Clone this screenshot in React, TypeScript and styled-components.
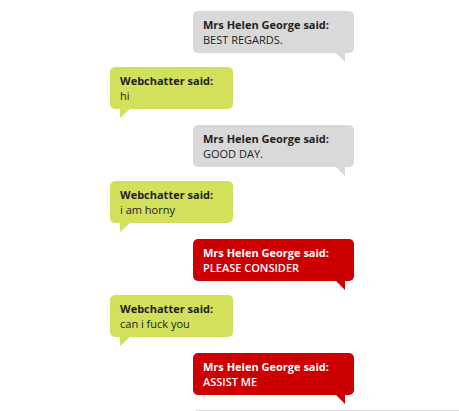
import React from "react";
import styled, { createGlobalStyle } from "styled-components";

const Global = createGlobalStyle`
  html, body { margin: 0; padding: 0; background: #ffffff; }
  body { font-family: "Open Sans", "DejaVu Sans", sans-serif; }
`;

type Kind = "gray" | "green" | "red";

const palette: Record<Kind, { bg: string; fg: string }> = {
  gray: { bg: "#d9d9d9", fg: "#222222" },
  green: { bg: "#d2e05b", fg: "#222222" },
  red: { bg: "#cc0000", fg: "#ffffff" },
};

const Log = styled.div`
  display: flex;
  flex-direction: column;
  width: 244px;
  padding: 11px 0 0 110px;
`;

const Bubble = styled.div<{ $kind: Kind }>`
  position: relative;
  box-sizing: border-box;
  align-self: ${(p) => (p.$kind === "green" ? "flex-start" : "flex-end")};
  width: ${(p) => (p.$kind === "green" ? "123px" : "161px")};
  height: 42px;
  margin-bottom: ${(p) => (p.$kind === "green" ? "16px" : "14px")};
  padding: 6px 10px 0 10px;
  border-radius: 5px;
  background: ${(p) => palette[p.$kind].bg};
  color: ${(p) => palette[p.$kind].fg};
  font-size: 11px;
  line-height: 15px;
  &::after {
    content: "";
    position: absolute;
    bottom: -9px;
    width: 0;
    height: 0;
    border-top: 9px solid ${(p) => palette[p.$kind].bg};
    ${(p) =>
      p.$kind === "green"
        ? "left: 10px; border-right: 10px solid transparent;"
        : "right: 9px; border-left: 9px solid transparent;"}
  }
`;

const Who = styled.div`
  font-weight: 700;
  white-space: nowrap;
`;

const Said = styled.div<{ $kind: Kind }>`
  white-space: nowrap;
  font-weight: ${(p) => (p.$kind === "red" ? 600 : 400)};
`;

const Divider = styled.div`
  margin: 1px 0 0 196px;
  border-top: 1px solid #dcdcdc;
`;

const messages: { kind: Kind; who: string; text: string }[] = [
  { kind: "gray", who: "Mrs Helen George", text: "BEST REGARDS." },
  { kind: "green", who: "Webchatter", text: "hi" },
  { kind: "gray", who: "Mrs Helen George", text: "GOOD DAY." },
  { kind: "green", who: "Webchatter", text: "i am horny" },
  { kind: "red", who: "Mrs Helen George", text: "PLEASE CONSIDER" },
  { kind: "green", who: "Webchatter", text: "can i fuck you" },
  { kind: "red", who: "Mrs Helen George", text: "ASSIST ME" },
];

export default function App() {
  return (
    <>
      <Global />
      <Log>
        {messages.map((m, i) => (
          <Bubble key={i} $kind={m.kind}>
            <Who>{m.who} said:</Who>
            <Said $kind={m.kind}>{m.text}</Said>
          </Bubble>
        ))}
      </Log>
      <Divider />
    </>
  );
}
